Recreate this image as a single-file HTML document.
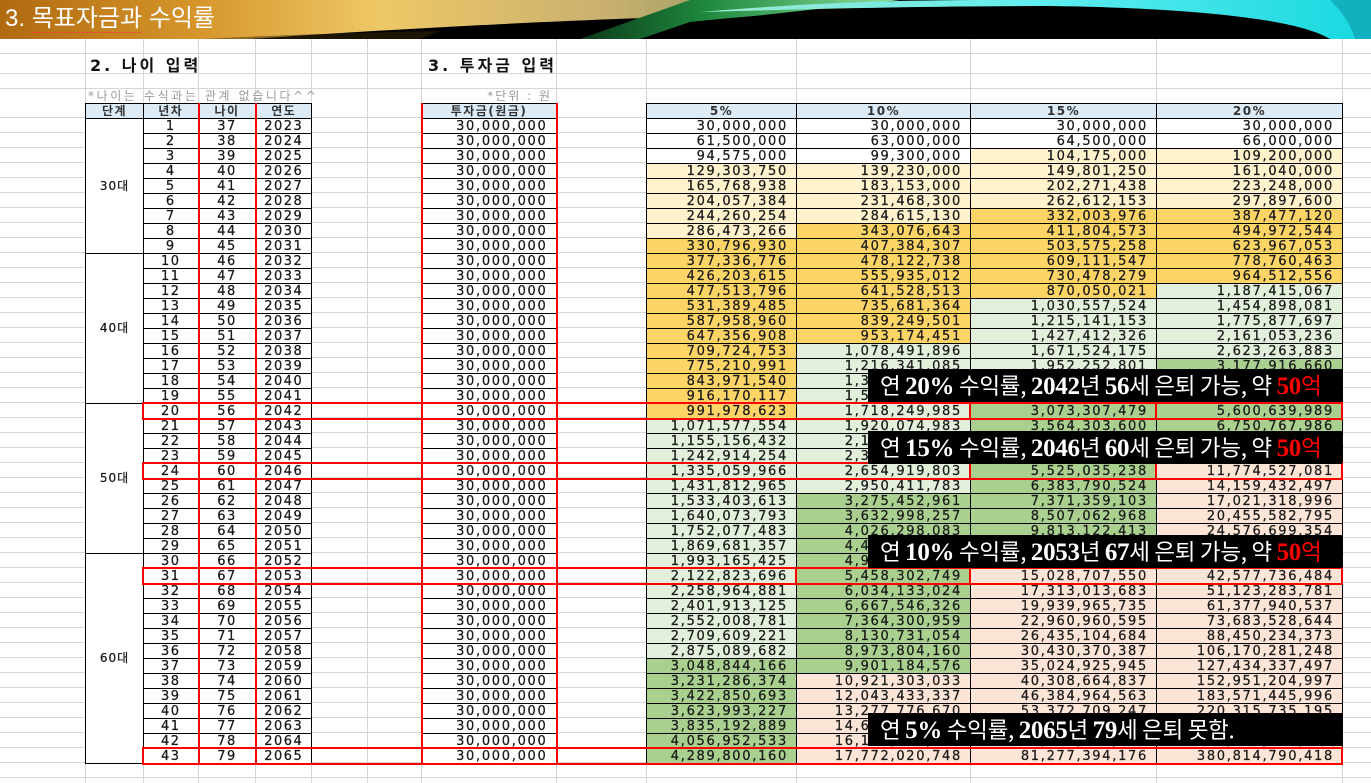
<!DOCTYPE html>
<html><head><meta charset="utf-8">
<style>
*{margin:0;padding:0;box-sizing:border-box}
body{width:1371px;height:783px;overflow:hidden;background:#fff;position:relative;font-family:"DejaVu Sans","Noto Sans CJK KR",sans-serif}
.hl{position:absolute;left:0;width:1371px;height:1px;background:#d6d6d6}
.vl{position:absolute;top:39px;width:1px;height:744px;background:#d6d6d6}
.grid{position:absolute;left:0;top:103px;width:1371px;height:680px;background:repeating-linear-gradient(180deg,transparent 0,transparent 14px,#d6d6d6 14px,#d6d6d6 15px)}
table{position:absolute;left:85px;top:103px;border-collapse:collapse;table-layout:fixed;width:1257px}
td{height:15px;padding:0;font-size:13px;letter-spacing:1.7px;color:#1a1a1a;-webkit-text-stroke:0.25px #1a1a1a;line-height:13px;white-space:nowrap;overflow:hidden;border:1px solid #000;text-align:right;padding-right:8px;background:#fff}
td.c{text-align:center;padding-right:0;letter-spacing:1.5px}
td.g{border:none;background:transparent}
td.a,td.i{border-left:2px solid #f00;border-right:2px solid #f00}
tr.h td{background:#ddebf7;text-align:center;padding-right:0;font-weight:bold;font-size:12px;color:#333;letter-spacing:1.5px;-webkit-text-stroke:0}
tr.h td.g{background:transparent}
td.st{text-align:center;padding:0;vertical-align:middle;letter-spacing:1px;font-size:12px}
.w{background:#fff}.ly{background:#fff2cc}.or{background:#fdd567}.lg{background:#e2efda}.gr{background:#a9d08e}.sa{background:#fce4d6}
.rb{position:absolute;border:2px solid #f00}
.bx{position:absolute;left:868px;width:474px;background:#000;color:#fff;font-family:"Noto Sans CJK KR",sans-serif;font-size:22.5px;line-height:33px;padding-left:12px;white-space:nowrap;letter-spacing:-0.3px;overflow:hidden}
.bx b{font-family:"Liberation Serif",serif;font-weight:bold;font-size:25px}
.bx .r{color:#f00}
.t{position:absolute;font-family:"DejaVu Sans","Noto Sans CJK KR",sans-serif;white-space:nowrap}
</style></head><body>
<svg width="1371" height="39" style="position:absolute;left:0;top:0">
<defs>
<linearGradient id="gd" x1="0" y1="0" x2="1" y2="0">
<stop offset="0" stop-color="#b06a10"/><stop offset="0.25" stop-color="#d5942a"/><stop offset="0.5" stop-color="#eec866"/><stop offset="0.8" stop-color="#c9b070"/><stop offset="1" stop-color="#8a9a60"/></linearGradient>
<linearGradient id="gn" x1="0" y1="0" x2="1" y2="0">
<stop offset="0" stop-color="#0c3a1a"/><stop offset="0.4" stop-color="#1f8a3e"/><stop offset="1" stop-color="#8fe0a0"/></linearGradient>
<linearGradient id="cy" x1="0" y1="0" x2="1" y2="0">
<stop offset="0" stop-color="#9fe8d0"/><stop offset="0.5" stop-color="#60eef0"/><stop offset="1" stop-color="#18d8e0"/></linearGradient>
</defs>
<rect width="1371" height="39" fill="#000"/>
<polygon points="0,0 760,0 560,39 0,39" fill="url(#gd)"/>
<path d="M250,39 C380,30 520,22 700,16 L640,39 Z" fill="#000"/>
<path d="M200,39 C300,34 380,32 440,31 L420,39 Z" fill="#3a2a08" opacity="0.5"/>
<polygon points="580,39 690,0 900,0 700,22 640,39" fill="url(#gn)"/>
<path d="M700,12 C820,2 900,0 1000,0 L1371,0 L1371,39 L1330,39 C1300,20 1200,8 1050,6 C900,6 780,10 700,12 Z" fill="url(#cy)"/>
<path d="M690,22 C820,8 950,5 1060,7 C1200,10 1290,22 1330,39 L640,39 Z" fill="#000"/>
<path d="M1330,0 L1371,0 L1371,39 L1355,39 C1350,22 1340,10 1330,0Z" fill="#0fa0b0" opacity="0.7"/>
</svg>
<div class="t" style="left:5px;top:4px;font-family:'Liberation Sans','Noto Sans CJK KR',sans-serif;font-size:24px;color:#fff;line-height:30px">3. <span style="border-bottom:1px dotted #f33">목표자금과</span> 수익률</div>

<div class="hl" style="top:53px"></div><div class="hl" style="top:73px"></div><div class="hl" style="top:88px"></div>
<div class="grid"></div>
<div class="vl" style="left:85px"></div><div class="vl" style="left:143px"></div><div class="vl" style="left:198px"></div><div class="vl" style="left:255px"></div><div class="vl" style="left:311px"></div><div class="vl" style="left:367px"></div><div class="vl" style="left:421px"></div><div class="vl" style="left:556px"></div><div class="vl" style="left:646px"></div><div class="vl" style="left:796px"></div><div class="vl" style="left:970px"></div><div class="vl" style="left:1156px"></div><div class="vl" style="left:1342px"></div>

<div class="t" style="left:90px;top:52px;font-size:16px;font-weight:bold;letter-spacing:3px;color:#111">2. 나이 입력</div>
<div class="t" style="left:428px;top:52px;font-size:16px;font-weight:bold;letter-spacing:3px;color:#111">3. 투자금 입력</div>
<div class="t" style="left:88px;top:87px;font-size:12px;letter-spacing:2.6px;color:#999">*나이는 수식과는 관계 없습니다^^</div>
<div class="t" style="left:466px;top:87px;width:86px;text-align:right;font-size:12px;letter-spacing:2px;color:#999">*단위 : 원</div>

<table>
<colgroup><col style="width:58px"><col style="width:55px"><col style="width:57px"><col style="width:56px"><col style="width:56px"><col style="width:54px"><col style="width:135px"><col style="width:90px"><col style="width:150px"><col style="width:174px"><col style="width:186px"><col style="width:186px"></colgroup>
<tr class="h"><td>단계</td><td>년차</td><td class="a">나이</td><td>연도</td><td class="g"></td><td class="g"></td><td class="i">투자금(원금)</td><td class="g"></td><td>5%</td><td>10%</td><td>15%</td><td>20%</td></tr>
<tr><td class="st" rowspan="9">30대</td><td class="c">1</td><td class="c a">37</td><td class="c">2023</td><td class="g"></td><td class="g"></td><td class="i">30,000,000</td><td class="g"></td><td class="w">30,000,000</td><td class="w">30,000,000</td><td class="w">30,000,000</td><td class="w">30,000,000</td></tr>
<tr><td class="c">2</td><td class="c a">38</td><td class="c">2024</td><td class="g"></td><td class="g"></td><td class="i">30,000,000</td><td class="g"></td><td class="w">61,500,000</td><td class="w">63,000,000</td><td class="w">64,500,000</td><td class="w">66,000,000</td></tr>
<tr><td class="c">3</td><td class="c a">39</td><td class="c">2025</td><td class="g"></td><td class="g"></td><td class="i">30,000,000</td><td class="g"></td><td class="w">94,575,000</td><td class="w">99,300,000</td><td class="ly">104,175,000</td><td class="ly">109,200,000</td></tr>
<tr><td class="c">4</td><td class="c a">40</td><td class="c">2026</td><td class="g"></td><td class="g"></td><td class="i">30,000,000</td><td class="g"></td><td class="ly">129,303,750</td><td class="ly">139,230,000</td><td class="ly">149,801,250</td><td class="ly">161,040,000</td></tr>
<tr><td class="c">5</td><td class="c a">41</td><td class="c">2027</td><td class="g"></td><td class="g"></td><td class="i">30,000,000</td><td class="g"></td><td class="ly">165,768,938</td><td class="ly">183,153,000</td><td class="ly">202,271,438</td><td class="ly">223,248,000</td></tr>
<tr><td class="c">6</td><td class="c a">42</td><td class="c">2028</td><td class="g"></td><td class="g"></td><td class="i">30,000,000</td><td class="g"></td><td class="ly">204,057,384</td><td class="ly">231,468,300</td><td class="ly">262,612,153</td><td class="ly">297,897,600</td></tr>
<tr><td class="c">7</td><td class="c a">43</td><td class="c">2029</td><td class="g"></td><td class="g"></td><td class="i">30,000,000</td><td class="g"></td><td class="ly">244,260,254</td><td class="ly">284,615,130</td><td class="or">332,003,976</td><td class="or">387,477,120</td></tr>
<tr><td class="c">8</td><td class="c a">44</td><td class="c">2030</td><td class="g"></td><td class="g"></td><td class="i">30,000,000</td><td class="g"></td><td class="ly">286,473,266</td><td class="or">343,076,643</td><td class="or">411,804,573</td><td class="or">494,972,544</td></tr>
<tr><td class="c">9</td><td class="c a">45</td><td class="c">2031</td><td class="g"></td><td class="g"></td><td class="i">30,000,000</td><td class="g"></td><td class="or">330,796,930</td><td class="or">407,384,307</td><td class="or">503,575,258</td><td class="or">623,967,053</td></tr>
<tr><td class="st" rowspan="10">40대</td><td class="c">10</td><td class="c a">46</td><td class="c">2032</td><td class="g"></td><td class="g"></td><td class="i">30,000,000</td><td class="g"></td><td class="or">377,336,776</td><td class="or">478,122,738</td><td class="or">609,111,547</td><td class="or">778,760,463</td></tr>
<tr><td class="c">11</td><td class="c a">47</td><td class="c">2033</td><td class="g"></td><td class="g"></td><td class="i">30,000,000</td><td class="g"></td><td class="or">426,203,615</td><td class="or">555,935,012</td><td class="or">730,478,279</td><td class="or">964,512,556</td></tr>
<tr><td class="c">12</td><td class="c a">48</td><td class="c">2034</td><td class="g"></td><td class="g"></td><td class="i">30,000,000</td><td class="g"></td><td class="or">477,513,796</td><td class="or">641,528,513</td><td class="or">870,050,021</td><td class="lg">1,187,415,067</td></tr>
<tr><td class="c">13</td><td class="c a">49</td><td class="c">2035</td><td class="g"></td><td class="g"></td><td class="i">30,000,000</td><td class="g"></td><td class="or">531,389,485</td><td class="or">735,681,364</td><td class="lg">1,030,557,524</td><td class="lg">1,454,898,081</td></tr>
<tr><td class="c">14</td><td class="c a">50</td><td class="c">2036</td><td class="g"></td><td class="g"></td><td class="i">30,000,000</td><td class="g"></td><td class="or">587,958,960</td><td class="or">839,249,501</td><td class="lg">1,215,141,153</td><td class="lg">1,775,877,697</td></tr>
<tr><td class="c">15</td><td class="c a">51</td><td class="c">2037</td><td class="g"></td><td class="g"></td><td class="i">30,000,000</td><td class="g"></td><td class="or">647,356,908</td><td class="or">953,174,451</td><td class="lg">1,427,412,326</td><td class="lg">2,161,053,236</td></tr>
<tr><td class="c">16</td><td class="c a">52</td><td class="c">2038</td><td class="g"></td><td class="g"></td><td class="i">30,000,000</td><td class="g"></td><td class="or">709,724,753</td><td class="lg">1,078,491,896</td><td class="lg">1,671,524,175</td><td class="lg">2,623,263,883</td></tr>
<tr><td class="c">17</td><td class="c a">53</td><td class="c">2039</td><td class="g"></td><td class="g"></td><td class="i">30,000,000</td><td class="g"></td><td class="or">775,210,991</td><td class="lg">1,216,341,085</td><td class="lg">1,952,252,801</td><td class="gr">3,177,916,660</td></tr>
<tr><td class="c">18</td><td class="c a">54</td><td class="c">2040</td><td class="g"></td><td class="g"></td><td class="i">30,000,000</td><td class="g"></td><td class="or">843,971,540</td><td class="lg">1,367,975,194</td><td class="lg">2,275,090,721</td><td class="gr">3,843,499,992</td></tr>
<tr><td class="c">19</td><td class="c a">55</td><td class="c">2041</td><td class="g"></td><td class="g"></td><td class="i">30,000,000</td><td class="g"></td><td class="or">916,170,117</td><td class="lg">1,534,772,713</td><td class="lg">2,646,354,329</td><td class="gr">4,642,199,990</td></tr>
<tr><td class="st" rowspan="10">50대</td><td class="c">20</td><td class="c a">56</td><td class="c">2042</td><td class="g"></td><td class="g"></td><td class="i">30,000,000</td><td class="g"></td><td class="or">991,978,623</td><td class="lg">1,718,249,985</td><td class="gr">3,073,307,479</td><td class="gr">5,600,639,989</td></tr>
<tr><td class="c">21</td><td class="c a">57</td><td class="c">2043</td><td class="g"></td><td class="g"></td><td class="i">30,000,000</td><td class="g"></td><td class="lg">1,071,577,554</td><td class="lg">1,920,074,983</td><td class="gr">3,564,303,600</td><td class="gr">6,750,767,986</td></tr>
<tr><td class="c">22</td><td class="c a">58</td><td class="c">2044</td><td class="g"></td><td class="g"></td><td class="i">30,000,000</td><td class="g"></td><td class="lg">1,155,156,432</td><td class="lg">2,142,082,481</td><td class="gr">4,128,949,140</td><td class="gr">8,130,921,583</td></tr>
<tr><td class="c">23</td><td class="c a">59</td><td class="c">2045</td><td class="g"></td><td class="g"></td><td class="i">30,000,000</td><td class="g"></td><td class="lg">1,242,914,254</td><td class="lg">2,386,290,729</td><td class="gr">4,778,291,511</td><td class="gr">9,787,105,900</td></tr>
<tr><td class="c">24</td><td class="c a">60</td><td class="c">2046</td><td class="g"></td><td class="g"></td><td class="i">30,000,000</td><td class="g"></td><td class="lg">1,335,059,966</td><td class="lg">2,654,919,803</td><td class="gr">5,525,035,238</td><td class="sa">11,774,527,081</td></tr>
<tr><td class="c">25</td><td class="c a">61</td><td class="c">2047</td><td class="g"></td><td class="g"></td><td class="i">30,000,000</td><td class="g"></td><td class="lg">1,431,812,965</td><td class="lg">2,950,411,783</td><td class="gr">6,383,790,524</td><td class="sa">14,159,432,497</td></tr>
<tr><td class="c">26</td><td class="c a">62</td><td class="c">2048</td><td class="g"></td><td class="g"></td><td class="i">30,000,000</td><td class="g"></td><td class="lg">1,533,403,613</td><td class="gr">3,275,452,961</td><td class="gr">7,371,359,103</td><td class="sa">17,021,318,996</td></tr>
<tr><td class="c">27</td><td class="c a">63</td><td class="c">2049</td><td class="g"></td><td class="g"></td><td class="i">30,000,000</td><td class="g"></td><td class="lg">1,640,073,793</td><td class="gr">3,632,998,257</td><td class="gr">8,507,062,968</td><td class="sa">20,455,582,795</td></tr>
<tr><td class="c">28</td><td class="c a">64</td><td class="c">2050</td><td class="g"></td><td class="g"></td><td class="i">30,000,000</td><td class="g"></td><td class="lg">1,752,077,483</td><td class="gr">4,026,298,083</td><td class="gr">9,813,122,413</td><td class="sa">24,576,699,354</td></tr>
<tr><td class="c">29</td><td class="c a">65</td><td class="c">2051</td><td class="g"></td><td class="g"></td><td class="i">30,000,000</td><td class="g"></td><td class="lg">1,869,681,357</td><td class="gr">4,458,927,891</td><td class="sa">11,315,090,775</td><td class="sa">29,522,039,225</td></tr>
<tr><td class="st" rowspan="14">60대</td><td class="c">30</td><td class="c a">66</td><td class="c">2052</td><td class="g"></td><td class="g"></td><td class="i">30,000,000</td><td class="g"></td><td class="lg">1,993,165,425</td><td class="gr">4,934,820,680</td><td class="sa">13,042,354,391</td><td class="sa">35,456,447,070</td></tr>
<tr><td class="c">31</td><td class="c a">67</td><td class="c">2053</td><td class="g"></td><td class="g"></td><td class="i">30,000,000</td><td class="g"></td><td class="lg">2,122,823,696</td><td class="gr">5,458,302,749</td><td class="sa">15,028,707,550</td><td class="sa">42,577,736,484</td></tr>
<tr><td class="c">32</td><td class="c a">68</td><td class="c">2054</td><td class="g"></td><td class="g"></td><td class="i">30,000,000</td><td class="g"></td><td class="lg">2,258,964,881</td><td class="gr">6,034,133,024</td><td class="sa">17,313,013,683</td><td class="sa">51,123,283,781</td></tr>
<tr><td class="c">33</td><td class="c a">69</td><td class="c">2055</td><td class="g"></td><td class="g"></td><td class="i">30,000,000</td><td class="g"></td><td class="lg">2,401,913,125</td><td class="gr">6,667,546,326</td><td class="sa">19,939,965,735</td><td class="sa">61,377,940,537</td></tr>
<tr><td class="c">34</td><td class="c a">70</td><td class="c">2056</td><td class="g"></td><td class="g"></td><td class="i">30,000,000</td><td class="g"></td><td class="lg">2,552,008,781</td><td class="gr">7,364,300,959</td><td class="sa">22,960,960,595</td><td class="sa">73,683,528,644</td></tr>
<tr><td class="c">35</td><td class="c a">71</td><td class="c">2057</td><td class="g"></td><td class="g"></td><td class="i">30,000,000</td><td class="g"></td><td class="lg">2,709,609,221</td><td class="gr">8,130,731,054</td><td class="sa">26,435,104,684</td><td class="sa">88,450,234,373</td></tr>
<tr><td class="c">36</td><td class="c a">72</td><td class="c">2058</td><td class="g"></td><td class="g"></td><td class="i">30,000,000</td><td class="g"></td><td class="lg">2,875,089,682</td><td class="gr">8,973,804,160</td><td class="sa">30,430,370,387</td><td class="sa">106,170,281,248</td></tr>
<tr><td class="c">37</td><td class="c a">73</td><td class="c">2059</td><td class="g"></td><td class="g"></td><td class="i">30,000,000</td><td class="g"></td><td class="gr">3,048,844,166</td><td class="gr">9,901,184,576</td><td class="sa">35,024,925,945</td><td class="sa">127,434,337,497</td></tr>
<tr><td class="c">38</td><td class="c a">74</td><td class="c">2060</td><td class="g"></td><td class="g"></td><td class="i">30,000,000</td><td class="g"></td><td class="gr">3,231,286,374</td><td class="sa">10,921,303,033</td><td class="sa">40,308,664,837</td><td class="sa">152,951,204,997</td></tr>
<tr><td class="c">39</td><td class="c a">75</td><td class="c">2061</td><td class="g"></td><td class="g"></td><td class="i">30,000,000</td><td class="g"></td><td class="gr">3,422,850,693</td><td class="sa">12,043,433,337</td><td class="sa">46,384,964,563</td><td class="sa">183,571,445,996</td></tr>
<tr><td class="c">40</td><td class="c a">76</td><td class="c">2062</td><td class="g"></td><td class="g"></td><td class="i">30,000,000</td><td class="g"></td><td class="gr">3,623,993,227</td><td class="sa">13,277,776,670</td><td class="sa">53,372,709,247</td><td class="sa">220,315,735,195</td></tr>
<tr><td class="c">41</td><td class="c a">77</td><td class="c">2063</td><td class="g"></td><td class="g"></td><td class="i">30,000,000</td><td class="g"></td><td class="gr">3,835,192,889</td><td class="sa">14,635,554,337</td><td class="sa">61,408,615,634</td><td class="sa">264,408,882,234</td></tr>
<tr><td class="c">42</td><td class="c a">78</td><td class="c">2064</td><td class="g"></td><td class="g"></td><td class="i">30,000,000</td><td class="g"></td><td class="gr">4,056,952,533</td><td class="sa">16,129,109,771</td><td class="sa">70,649,907,979</td><td class="sa">317,320,658,681</td></tr>
<tr><td class="c">43</td><td class="c a">79</td><td class="c">2065</td><td class="g"></td><td class="g"></td><td class="i">30,000,000</td><td class="g"></td><td class="gr">4,289,800,160</td><td class="sa">17,772,020,748</td><td class="sa">81,277,394,176</td><td class="sa">380,814,790,418</td></tr>
</table>

<div class="rb" style="left:142px;top:402px;width:1201px;height:18px"></div>
<div class="rb" style="left:969px;top:402px;width:188px;height:18px"></div>
<div class="rb" style="left:142px;top:462px;width:1201px;height:18px"></div>
<div class="rb" style="left:969px;top:462px;width:188px;height:18px"></div>
<div class="rb" style="left:142px;top:567px;width:1201px;height:18px"></div>
<div class="rb" style="left:795px;top:567px;width:176px;height:18px"></div>
<div class="rb" style="left:142px;top:747px;width:1201px;height:18px"></div>

<div class="bx" style="top:369px;height:33px">연 <b>20%</b> 수익률, <b>2042</b>년 <b>56</b>세 은퇴 가능, 약 <b class="r">50</b><span class="r">억</span></div>
<div class="bx" style="top:431px;height:33px">연 <b>15%</b> 수익률, <b>2046</b>년 <b>60</b>세 은퇴 가능, 약 <b class="r">50</b><span class="r">억</span></div>
<div class="bx" style="top:535px;height:33px">연 <b>10%</b> 수익률, <b>2053</b>년 <b>67</b>세 은퇴 가능, 약 <b class="r">50</b><span class="r">억</span></div>
<div class="bx" style="top:713px;height:33px">연 <b>5%</b> 수익률, <b>2065</b>년 <b>79</b>세 은퇴 못함.</div>
</body></html>
